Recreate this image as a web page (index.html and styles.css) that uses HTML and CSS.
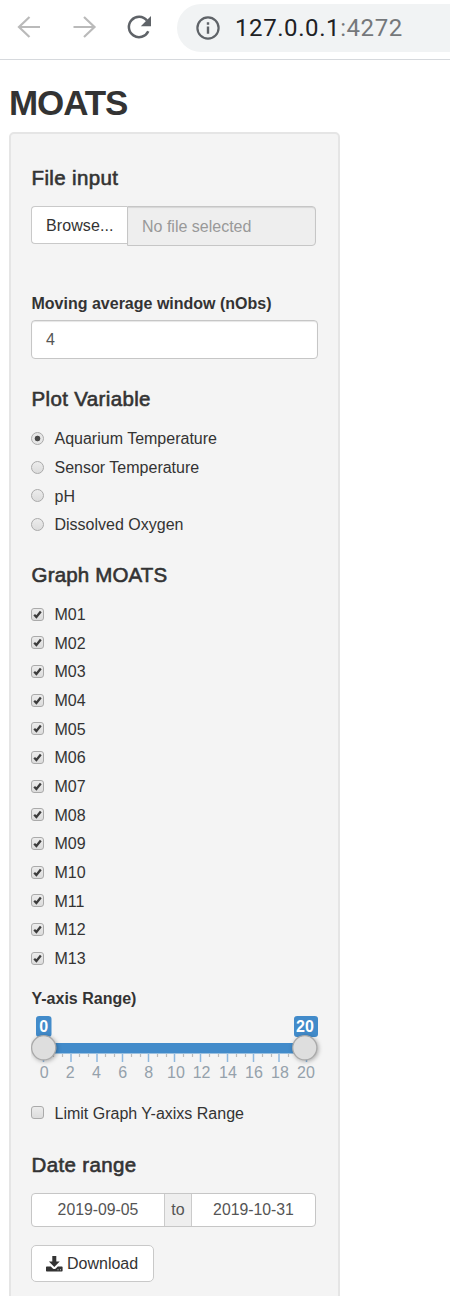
FILE: index.html
```html
<!DOCTYPE html>
<html lang="en">
<head>
<meta charset="utf-8">
<title>MOATS</title>
<link rel="stylesheet" href="styles.css">
</head>
<body>
<header class="toolbar">
  <svg class="nav-icons" width="177" height="58" viewBox="0 0 177 58" fill="none">
    <path d="M40 27H19.500M29.500 17 19 27l10.500 10" stroke="#bababa" stroke-width="2.200"/>
    <path d="M73.500 27H94M84 17l10.500 10L84 37" stroke="#bababa" stroke-width="2.200"/>
    <path d="M147 20.500A10.200 10.200 0 1 0 148.300 31.300" stroke="#5f6368" stroke-width="2.500"/>
    <path d="M151 16v10.200h-10.200z" fill="#5f6368"/>
  </svg>
  <div class="address">
    <svg width="24" height="24" viewBox="0 0 24 24" fill="none">
      <circle cx="12" cy="12" r="10.600" stroke="#5f6368" stroke-width="2.200"/>
      <path d="M12 6.200v2.500M12 10.400v7.300" stroke="#5f6368" stroke-width="2.400"/>
    </svg>
    <span class="url">127.0.0.1<span class="port">:4272</span></span>
  </div>
</header>
<main>
  <h1 class="title">MOATS</h1>
  <form class="well">
    <h4 class="heading">File input</h4>
    <div class="file">
      <span class="browse">Browse...</span><span class="filename">No file selected</span>
    </div>
    <div class="label window-label">Moving average window (nObs)</div>
    <div class="number">4</div>
    <h4 class="heading variable-heading">Plot Variable</h4>
    <div class="options">
      <div class="row"><i class="radio checked"></i>Aquarium Temperature</div>
      <div class="row"><i class="radio"></i>Sensor Temperature</div>
      <div class="row raised"><i class="radio"></i>pH</div>
      <div class="row short"><i class="radio"></i>Dissolved Oxygen</div>
    </div>
    <h4 class="heading graph-heading">Graph MOATS</h4>
    <svg class="defs" width="0" height="0"><symbol id="tick" viewBox="0 0 13 13"><path d="M3.200 6.700 5.400 9 9.800 3.600" fill="none" stroke="#3c3c3c" stroke-width="2.300"/></symbol></svg>
    <div class="options moats">
      <div class="row"><i class="box"><svg><use href="#tick"/></svg></i>M01</div>
      <div class="row raised"><i class="box"><svg><use href="#tick"/></svg></i>M02</div>
      <div class="row short"><i class="box"><svg><use href="#tick"/></svg></i>M03</div>
      <div class="row"><i class="box"><svg><use href="#tick"/></svg></i>M04</div>
      <div class="row raised"><i class="box"><svg><use href="#tick"/></svg></i>M05</div>
      <div class="row short"><i class="box"><svg><use href="#tick"/></svg></i>M06</div>
      <div class="row"><i class="box"><svg><use href="#tick"/></svg></i>M07</div>
      <div class="row raised"><i class="box"><svg><use href="#tick"/></svg></i>M08</div>
      <div class="row short"><i class="box"><svg><use href="#tick"/></svg></i>M09</div>
      <div class="row"><i class="box"><svg><use href="#tick"/></svg></i>M10</div>
      <div class="row raised"><i class="box"><svg><use href="#tick"/></svg></i>M11</div>
      <div class="row short"><i class="box"><svg><use href="#tick"/></svg></i>M12</div>
      <div class="row"><i class="box"><svg><use href="#tick"/></svg></i>M13</div>
    </div>
    <div class="label range-label">Y-axis Range)</div>
    <svg class="slider" width="292" height="70" viewBox="0 0 292 70">
      <path class="minor" d="M22.500 42v3M31.500 42v3M48.500 42v3M57.500 42v3M74.500 42v3M83.500 42v3M100.500 42v3M109.500 42v3M126.500 42v3M135.500 42v3M152.500 42v3M161.500 42v3M178.500 42v3M187.500 42v3M205.500 42v3M214.500 42v3M231.500 42v3M240.500 42v3M257.500 42v3M266.500 42v3"/>
      <path class="major" d="M12.500 42v8M40 42v8M66 42v8M91.500 42v8M117.500 42v8M143.500 42v8M169.500 42v8M196.500 42v8M222.500 42v8M248 42v8M275.500 42v8"/>
      <rect x="13" y="31" width="261" height="10.500" fill="#428bca"/>
      <rect x="5" y="4" width="15.500" height="21" rx="3" fill="#428bca"/>
      <rect x="263" y="4" width="24" height="21" rx="3" fill="#428bca"/>
      <g class="value"><text x="12.800" y="19.500">0</text><text x="274" y="19.500">20</text></g>
      <g class="handle"><circle cx="12.700" cy="35.800" r="12.100"/><circle cx="273.800" cy="35.800" r="12.100"/></g>
      <g class="scale"><text x="13.200" y="65.500">0</text><text x="39.200" y="65.500">2</text><text x="65.500" y="65.500">4</text><text x="91.700" y="65.500">6</text><text x="117.700" y="65.500">8</text><text x="145" y="65.500">10</text><text x="170.600" y="65.500">12</text><text x="197" y="65.500">14</text><text x="223" y="65.500">16</text><text x="249" y="65.500">18</text><text x="275" y="65.500">20</text></g>
    </svg>
    <div class="row limit raised"><i class="box"></i>Limit Graph Y-axixs Range</div>
    <h4 class="heading date-heading">Date range</h4>
    <div class="dates"><span class="date">2019-09-05</span><span class="to">to</span><span class="date">2019-10-31</span></div>
    <div class="download">
      <svg width="17" height="16" viewBox="0 0 17 16" fill="#333"><path d="M6.300 0h4v5.500h3.400L8.300 11 2.900 5.500h3.400z"/><path d="M.8 10.500h4l2 2q1.500 1 3 0l2-2h4q.8 0 .8.800v3.400q0 .8-.8.800H.8q-.8 0-.8-.8v-3.400q0-.8.800-.8z"/><path d="M11.500 13.200h1v1h-1zM14 13.200h1v1h-1z" fill="#ccc"/></svg>
      <span>Download</span>
    </div>
  </form>
</main>
</body>
</html>
```
FILE: styles.css
```css
* { box-sizing: border-box; }
body {
  margin: 0;
  height: 1296px;
  overflow: hidden;
  background: #fff;
  color: #333;
  font: 16px/24px "Liberation Sans", Arial, sans-serif;
}
.toolbar {
  display: flex;
  height: 60px;
  border-bottom: 1.500px solid #d6d9dd;
}
.nav-icons { display: block; flex: none; }
.address {
  display: flex;
  align-items: center;
  gap: 15px;
  flex: 1;
  height: 48px;
  margin-top: 4px;
  padding-left: 19px;
  border-radius: 24px 0 0 24px;
  background: #f1f3f4;
}
.url {
  color: #202124;
  font-family: Roboto, sans-serif;
  font-size: 24px;
  letter-spacing: .58px;
}
.port { color: #75787b; }
main { padding: 0 110px 0 9px; }
.title {
  margin: 0;
  height: 72px;
  padding-top: 22px;
  font-size: 35px;
  font-weight: 700;
  line-height: 42px;
  letter-spacing: -1.100px;
}
.well {
  height: 1200px;
  padding: 32px 22px 0 20px;
  border: 2px solid #e5e5e5;
  border-radius: 5px;
  background: #f4f4f4;
}
.heading {
  margin: 0;
  font-size: 20.500px;
  font-weight: 400;
  line-height: 24px;
  letter-spacing: .35px;
  text-indent: .6px;
  -webkit-text-stroke: .6px #333;
}
.file { display: flex; align-items: flex-start; margin-top: 16px; width: 285px; }
.browse {
  width: 96px;
  height: 38px;
  padding-left: 14px;
  border: 1.500px solid #c9c9c9;
  border-right: 0;
  border-radius: 4px 0 0 4px;
  background: #fff;
  line-height: 38px;
  letter-spacing: .1px;
}
.filename {
  flex: 1;
  height: 40px;
  padding-left: 14px;
  border: 1.500px solid #c6c6c6;
  border-radius: 0 4px 4px 0;
  background: #eee;
  color: #999;
  line-height: 39px;
  box-shadow: inset 0 1px 1px rgba(0, 0, 0, .1);
}
.label { font-size: 16px; font-weight: 700; text-indent: .5px; }
.window-label { margin-top: 46px; }
.number {
  width: 287px;
  height: 39px;
  margin-top: 4px;
  padding-left: 14px;
  border: 1.500px solid #c6c6c6;
  border-radius: 4px;
  background: #fff;
  color: #555;
  line-height: 38px;
  box-shadow: inset 0 1px 1px rgba(0, 0, 0, .1);
}
.variable-heading { margin-top: 28px; }
.options { margin-top: 13px; }
.row { display: flex; align-items: center; gap: 10.500px; height: 29px; }
.short { margin-top: -1px; }
.radio, .box {
  width: 13px;
  height: 13px;
  border: 1px solid #aaa;
  background: linear-gradient(#ececec, #dcdcdc);
}
.radio { border-radius: 50%; }
.checked { background: radial-gradient(circle, #484848 2.500px, #e6e6e6 3.200px); }
.box { display: flex; border-radius: 3px; }
.box svg { flex: none; width: 13px; height: 13px; margin: -1px; }
.raised .radio, .raised .box { margin-bottom: 3px; }
.defs { display: block; }
.graph-heading { margin-top: 24px; letter-spacing: .15px; }
.moats { margin-top: 13px; }
.range-label { margin-top: 14px; }
.slider { display: block; margin-top: 1px; font-size: 16px; text-anchor: middle; }
.minor { stroke: #bbb; stroke-width: 1.200; }
.major { stroke: #8db8df; stroke-width: 1.500; }
.value { fill: #fff; font-weight: 700; }
.handle { fill: #dedede; stroke: #aaa; stroke-width: 1.300; filter: drop-shadow(1px 1px 2px rgba(0, 0, 0, .3)); }
.scale { fill: #95a1ab; }
.limit { margin-top: 17px; }
.date-heading { margin-top: 25px; }
.dates {
  display: grid;
  grid-template-columns: 132px 28px 123px;
  width: 285px;
  height: 34px;
  margin-top: 16px;
  border: 1.500px solid #c6c6c6;
  border-radius: 4px;
  background: #fff;
  color: #555;
  text-align: center;
  line-height: 32px;
  overflow: hidden;
}
.date { font-size: 15.800px; }
.to { border: solid #cbcbcb; border-width: 0 1.500px; background: #eee; }
.download {
  display: flex;
  align-items: center;
  gap: 4px;
  width: 123px;
  height: 37px;
  margin-top: 18px;
  padding-left: 14px;
  border: 1.500px solid #c9c9c9;
  border-radius: 5px;
  background: #fff;
}
```
